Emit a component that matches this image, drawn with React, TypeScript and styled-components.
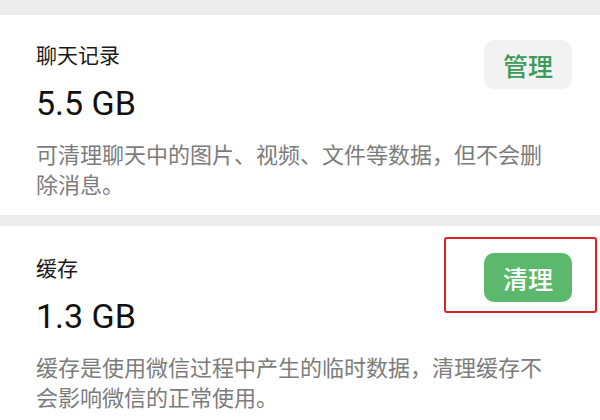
import React from "react";
import styled, { createGlobalStyle } from "styled-components";

const GlobalStyle = createGlobalStyle`
  html, body {
    margin: 0;
    padding: 0;
    background: #ededed;
  }
  body {
    font-family: "Noto Sans CJK SC", "Noto Sans", sans-serif;
  }
`;

const Page = styled.div`
  width: 600px;
  height: 420px;
  overflow: hidden;
  background: #ededed;
  display: flex;
  flex-direction: column;
  gap: 11px;
  padding-top: 15px;
  box-sizing: border-box;
`;

const Card = styled.section<{ $padTop: number }>`
  background: #ffffff;
  padding: ${(p) => p.$padTop}px 28px 17px 36px;
  display: flex;
  flex-direction: column;
  gap: 15px;
`;

const Top = styled.div`
  display: flex;
  justify-content: space-between;
  align-items: flex-start;
`;

const Info = styled.div`
  display: flex;
  flex-direction: column;
  gap: 14px;
`;

const Title = styled.div`
  font-family: "Noto Sans CJK SC", sans-serif;
  font-size: 21px;
  line-height: 30px;
  color: #1a1a1a;
`;

const Size = styled.div`
  font-family: Roboto, "Liberation Sans", sans-serif;
  font-size: 34px;
  line-height: 40px;
  color: #111111;
`;

const Desc = styled.p`
  margin: 0;
  max-width: 515px;
  font-family: "Noto Sans CJK SC", sans-serif;
  font-size: 22px;
  line-height: 30px;
  color: #7c7c7c;
`;

const ButtonWrap = styled.div`
  position: relative;
  margin-top: 1px;
`;

const ActionButton = styled.button<{ $primary?: boolean }>`
  width: 88px;
  height: 49px;
  border: none;
  border-radius: 10px;
  background: ${(p) => (p.$primary ? "#5bb86c" : "#f2f2f2")};
  color: ${(p) => (p.$primary ? "#ffffff" : "#3f9b5a")};
  font-family: "Noto Sans CJK SC", sans-serif;
  font-size: 25px;
  font-weight: 500;
  padding: 0;
  cursor: pointer;
`;

const Highlight = styled.div`
  position: absolute;
  left: -40px;
  right: -25px;
  top: -16px;
  bottom: -11px;
  border: 2px solid #dc2228;
  border-radius: 3px;
  pointer-events: none;
`;

type Item = {
  title: string;
  size: string;
  desc: string;
  action: string;
  primary?: boolean;
  highlighted?: boolean;
  padTop: number;
};

const items: Item[] = [
  {
    title: "聊天记录",
    size: "5.5 GB",
    desc: "可清理聊天中的图片、视频、文件等数据，但不会删除消息。",
    action: "管理",
    padTop: 24,
  },
  {
    title: "缓存",
    size: "1.3 GB",
    desc: "缓存是使用微信过程中产生的临时数据，清理缓存不会影响微信的正常使用。",
    action: "清理",
    primary: true,
    highlighted: true,
    padTop: 26,
  },
];

export default function App() {
  return (
    <>
      <GlobalStyle />
      <Page>
        {items.map((it) => (
          <Card key={it.title} $padTop={it.padTop}>
            <Top>
              <Info>
                <Title>{it.title}</Title>
                <Size>{it.size}</Size>
              </Info>
              <ButtonWrap>
                <ActionButton $primary={it.primary}>{it.action}</ActionButton>
                {it.highlighted && <Highlight />}
              </ButtonWrap>
            </Top>
            <Desc>{it.desc}</Desc>
          </Card>
        ))}
      </Page>
    </>
  );
}
